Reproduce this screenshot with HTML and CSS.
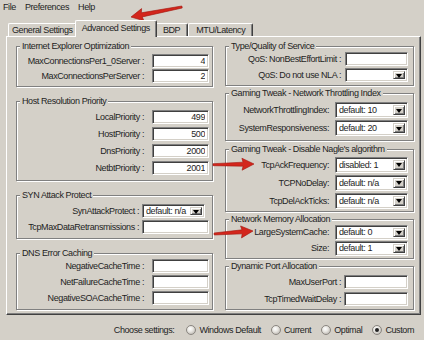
FILE: index.html
```html
<!DOCTYPE html>
<html lang="en">
<head>
    <meta charset="UTF-8">
    <meta name="viewport" content="width=device-width, initial-scale=1.0">
    <title>TCP Optimizer - Advanced Settings</title>
    <link rel="stylesheet" href="styles.css">
</head>
<body>

<div class="menu">
    <span>File</span>
    <span>Preferences</span>
    <span>Help</span>
</div>

<div class="tabs">
    <div class="tab">General Settings</div>
    <div class="tab active">Advanced Settings</div>
    <div class="tab">BDP</div>
    <div class="tab">MTU/Latency</div>
</div>

<div class="panel">
    <div class="column left">
        <div class="group g-ie">
            <div class="group-title">Internet Explorer Optimization</div>
            <div class="rows">
                <div class="row"><label>MaxConnectionsPer1_0Server :</label><input class="field num" type="text" value="4"></div>
                <div class="row"><label>MaxConnectionsPerServer :</label><input class="field num" type="text" value="2"></div>
            </div>
        </div>

        <div class="group g-host">
            <div class="group-title">Host Resolution Priority</div>
            <div class="rows">
                <div class="row"><label>LocalPriority :</label><input class="field num" type="text" value="499"></div>
                <div class="row"><label>HostPriority :</label><input class="field num" type="text" value="500"></div>
                <div class="row"><label>DnsPriority :</label><input class="field num" type="text" value="2000"></div>
                <div class="row"><label>NetbtPriority :</label><input class="field num" type="text" value="2001"></div>
            </div>
        </div>

        <div class="group g-syn">
            <div class="group-title">SYN Attack Protect</div>
            <div class="rows">
                <div class="row"><label>SynAttackProtect :</label><div class="select"><span>default: n/a</span><span class="drop-btn"></span></div></div>
                <div class="row"><label>TcpMaxDataRetransmissions :</label><input class="field" type="text" value=""></div>
            </div>
        </div>

        <div class="group g-dns">
            <div class="group-title">DNS Error Caching</div>
            <div class="rows">
                <div class="row"><label>NegativeCacheTime :</label><input class="field" type="text" value=""></div>
                <div class="row"><label>NetFailureCacheTime :</label><input class="field" type="text" value=""></div>
                <div class="row"><label>NegativeSOACacheTime :</label><input class="field" type="text" value=""></div>
            </div>
        </div>
    </div>

    <div class="column right">
        <div class="group g-qos">
            <div class="group-title">Type/Quality of Service</div>
            <div class="rows">
                <div class="row"><label>QoS: NonBestEffortLimit :</label><input class="field" type="text" value=""></div>
                <div class="row"><label>QoS: Do not use NLA :</label><div class="select"><span></span><span class="drop-btn"></span></div></div>
            </div>
        </div>

        <div class="group g-throttle">
            <div class="group-title">Gaming Tweak - Network Throttling Index</div>
            <div class="rows">
                <div class="row"><label>NetworkThrottlingIndex:</label><div class="select"><span>default: 10</span><span class="drop-btn"></span></div></div>
                <div class="row"><label>SystemResponsiveness:</label><div class="select"><span>default: 20</span><span class="drop-btn"></span></div></div>
            </div>
        </div>

        <div class="group g-nagle">
            <div class="group-title">Gaming Tweak - Disable Nagle's algorithm</div>
            <div class="rows">
                <div class="row"><label>TcpAckFrequency:</label><div class="select"><span>disabled: 1</span><span class="drop-btn"></span></div></div>
                <div class="row"><label>TCPNoDelay:</label><div class="select"><span>default: n/a</span><span class="drop-btn"></span></div></div>
                <div class="row"><label>TcpDelAckTicks:</label><div class="select"><span>default: n/a</span><span class="drop-btn"></span></div></div>
            </div>
        </div>

        <div class="group g-memory">
            <div class="group-title">Network Memory Allocation</div>
            <div class="rows">
                <div class="row"><label>LargeSystemCache:</label><div class="select"><span>default: 0</span><span class="drop-btn"></span></div></div>
                <div class="row"><label>Size:</label><div class="select"><span>default: 1</span><span class="drop-btn"></span></div></div>
            </div>
        </div>

        <div class="group g-port">
            <div class="group-title">Dynamic Port Allocation</div>
            <div class="rows">
                <div class="row"><label>MaxUserPort :</label><input class="field" type="text" value=""></div>
                <div class="row"><label>TcpTimedWaitDelay :</label><input class="field" type="text" value=""></div>
            </div>
        </div>
    </div>
</div>

<div class="choose">
    <span class="choose-label">Choose settings:</span>
    <label class="option"><span class="radio"></span>Windows Default</label>
    <label class="option"><span class="radio"></span>Current</label>
    <label class="option"><span class="radio"></span>Optimal</label>
    <label class="option"><span class="radio checked"></span>Custom</label>
</div>

<!-- red callout arrows drawn over the dialog -->
<svg class="arrows" width="424" height="340" viewBox="0 0 424 340">
    <g fill="#d3261c" stroke="#a3170f" stroke-width="0.6" stroke-linejoin="round">
        <path transform="translate(131 17) rotate(168.9)" d="M-52 -1 L-11 -2.1 L-12 -6.2 L0 0 L-12 6.2 L-11 2.1 L-52 1 Z"/>
        <path transform="translate(254 164) rotate(-1)" d="M-41 -1 L-11 -2 L-12 -6 L0 0 L-12 6 L-11 2 L-41 1 Z"/>
        <path transform="translate(253 231) rotate(-4.4)" d="M-39 -1 L-11 -2 L-12 -6 L0 0 L-12 6 L-11 2 L-39 1 Z"/>
    </g>
</svg>

</body>
</html>
```

FILE: styles.css
```css
body {
    position: relative;
    width: 424px;
    height: 340px;
    margin: 0;
    overflow: hidden;
    font-family: "Liberation Sans", Arial, sans-serif;
    font-size: 9px;
    letter-spacing: -0.4px;
    color: #1e1e1e;
    background-color: #d4d0c8;
}

/* menu bar */
.menu {
    display: flex;
    gap: 9px;
    height: 14px;
    line-height: 14px;
    padding-left: 3px;
}

/* tab strip */
.tabs {
    display: flex;
    align-items: flex-end;
    height: 16px;
    margin-top: 6px;
    padding-left: 8px;
}

.tab {
    height: 12px;
    line-height: 12px;
    padding: 0 7px;
    border: 1px solid;
    border-color: #fff #404040 transparent #fff;
    border-bottom: none;
    border-radius: 2px 2px 0 0;
    box-shadow: inset -1px 0 #808080;
}

.tab:first-child {
    padding: 0 3px;
}

.tab.active {
    position: relative;
    z-index: 1;
    height: 16px;
    line-height: 14px;
    margin: 0 -2px -1px;
    padding: 0 6px;
    background-color: #d4d0c8;
}

/* tab page */
.panel {
    display: flex;
    gap: 12px;
    box-sizing: border-box;
    width: 415px;
    height: 279px;
    margin-left: 6px;
    padding: 9px 6px 4px 9px;
    border: 1px solid;
    border-color: #fff #404040 #404040 #fff;
    box-shadow: inset -1px -1px #808080;
}

.column {
    display: flex;
    flex-direction: column;
    justify-content: space-between;
}

.column.left {
    width: 197px;
}

.column.right {
    width: 189px;
}

/* group boxes */
.group {
    border: 1px solid #808080;
    box-shadow: inset 1px 1px #fff, 1px 1px #fff;
    padding: 0 3px 4px 6px;
}

.column.right .group {
    padding-right: 5px;
}

.group-title {
    width: fit-content;
    height: 11px;
    line-height: 11px;
    margin: -6px 0 0 -3px;
    padding: 0 2px;
    background-color: #d4d0c8;
}

.rows {
    display: flex;
    flex-direction: column;
    gap: 2px;
}

.row {
    display: flex;
    align-items: center;
    justify-content: flex-end;
    gap: 8px;
    height: 14px;
}

.row label {
    white-space: nowrap;
}

/* text boxes and combo boxes */
.field,
.select {
    box-sizing: border-box;
    width: 57px;
    height: 100%;
    margin: 0;
    background-color: #fff;
    border: 1px solid;
    border-color: #808080 #fff #fff #808080;
    box-shadow: inset 1px 1px #404040, inset -1px -1px #d4d0c8;
}

.field {
    padding: 0 3px;
    font: inherit;
    letter-spacing: inherit;
    color: inherit;
    outline: none;
}

.field.num {
    text-align: right;
}

.select {
    display: flex;
    align-items: center;
    justify-content: space-between;
    padding: 2px 2px 2px 3px;
    white-space: nowrap;
}

.drop-btn {
    display: flex;
    align-items: center;
    justify-content: center;
    box-sizing: border-box;
    width: 12px;
    height: 100%;
    background-color: #d4d0c8;
    border: 1px solid;
    border-color: #d4d0c8 #404040 #404040 #d4d0c8;
    box-shadow: inset 1px 1px #fff, inset -1px -1px #808080;
}

.drop-btn::after {
    content: "";
    border-left: 3.5px solid transparent;
    border-right: 3.5px solid transparent;
    border-top: 4px solid #000;
    margin-top: 1px;
}

/* per-group spacing */
.g-ie { padding-bottom: 3px; }
.g-ie .rows { padding-top: 2px; gap: 1px; }

.g-host { padding-bottom: 5px; }
.g-host .rows { padding-top: 3px; gap: 3px; }

.g-syn { padding-bottom: 4px; }
.g-syn .rows { padding-top: 3px; gap: 2px; }
.g-syn .row { gap: 3px; }
.g-syn .field { width: 67px; }
.g-syn .select { width: 63px; margin-right: 4px; }

.g-dns { padding-bottom: 4px; }
.g-dns .rows { gap: 2px; }

.g-qos { padding-bottom: 3px; }
.g-qos .row { gap: 4px; }
.g-qos .field,
.g-qos .select { width: 63px; }

.g-throttle { padding-bottom: 4px; }
.g-throttle .rows { padding-top: 3px; gap: 2px; }
.g-throttle .row,
.g-nagle .row,
.g-memory .row { gap: 6px; }
.g-throttle .row,
.g-nagle .row { height: 16px; }
.g-throttle .select,
.g-nagle .select,
.g-memory .select { width: 73px; }

.g-nagle { padding-bottom: 2px; }
.g-nagle .rows { padding-top: 2px; gap: 2px; }

.g-memory { padding-bottom: 2px; }
.g-memory .rows { gap: 1px; }
.g-memory .row { height: 15px; }

.g-port { padding-bottom: 3px; }
.g-port .rows { padding-top: 3px; gap: 3px; }
.g-port .row { gap: 3px; }
.g-port .field { width: 64px; }

/* bottom radio row */
.choose {
    display: flex;
    align-items: center;
    justify-content: flex-end;
    gap: 10px;
    height: 14px;
    margin-top: 8px;
    padding-right: 10px;
}

.choose-label {
    margin-right: 2px;
}

.option {
    display: flex;
    align-items: center;
    gap: 3px;
}

.radio {
    position: relative;
    box-sizing: border-box;
    width: 10px;
    height: 10px;
    border: 1px solid #8a8680;
    border-radius: 50%;
    background: radial-gradient(circle at 40% 35%, #fff 0, #e8e6e1 40%, #aaa69f 100%);
}

.radio.checked::after {
    content: "";
    position: absolute;
    top: 2px;
    left: 2px;
    width: 4px;
    height: 4px;
    border-radius: 50%;
    background-color: #222;
}

.arrows {
    position: absolute;
    top: 0;
    left: 0;
    pointer-events: none;
}
```
